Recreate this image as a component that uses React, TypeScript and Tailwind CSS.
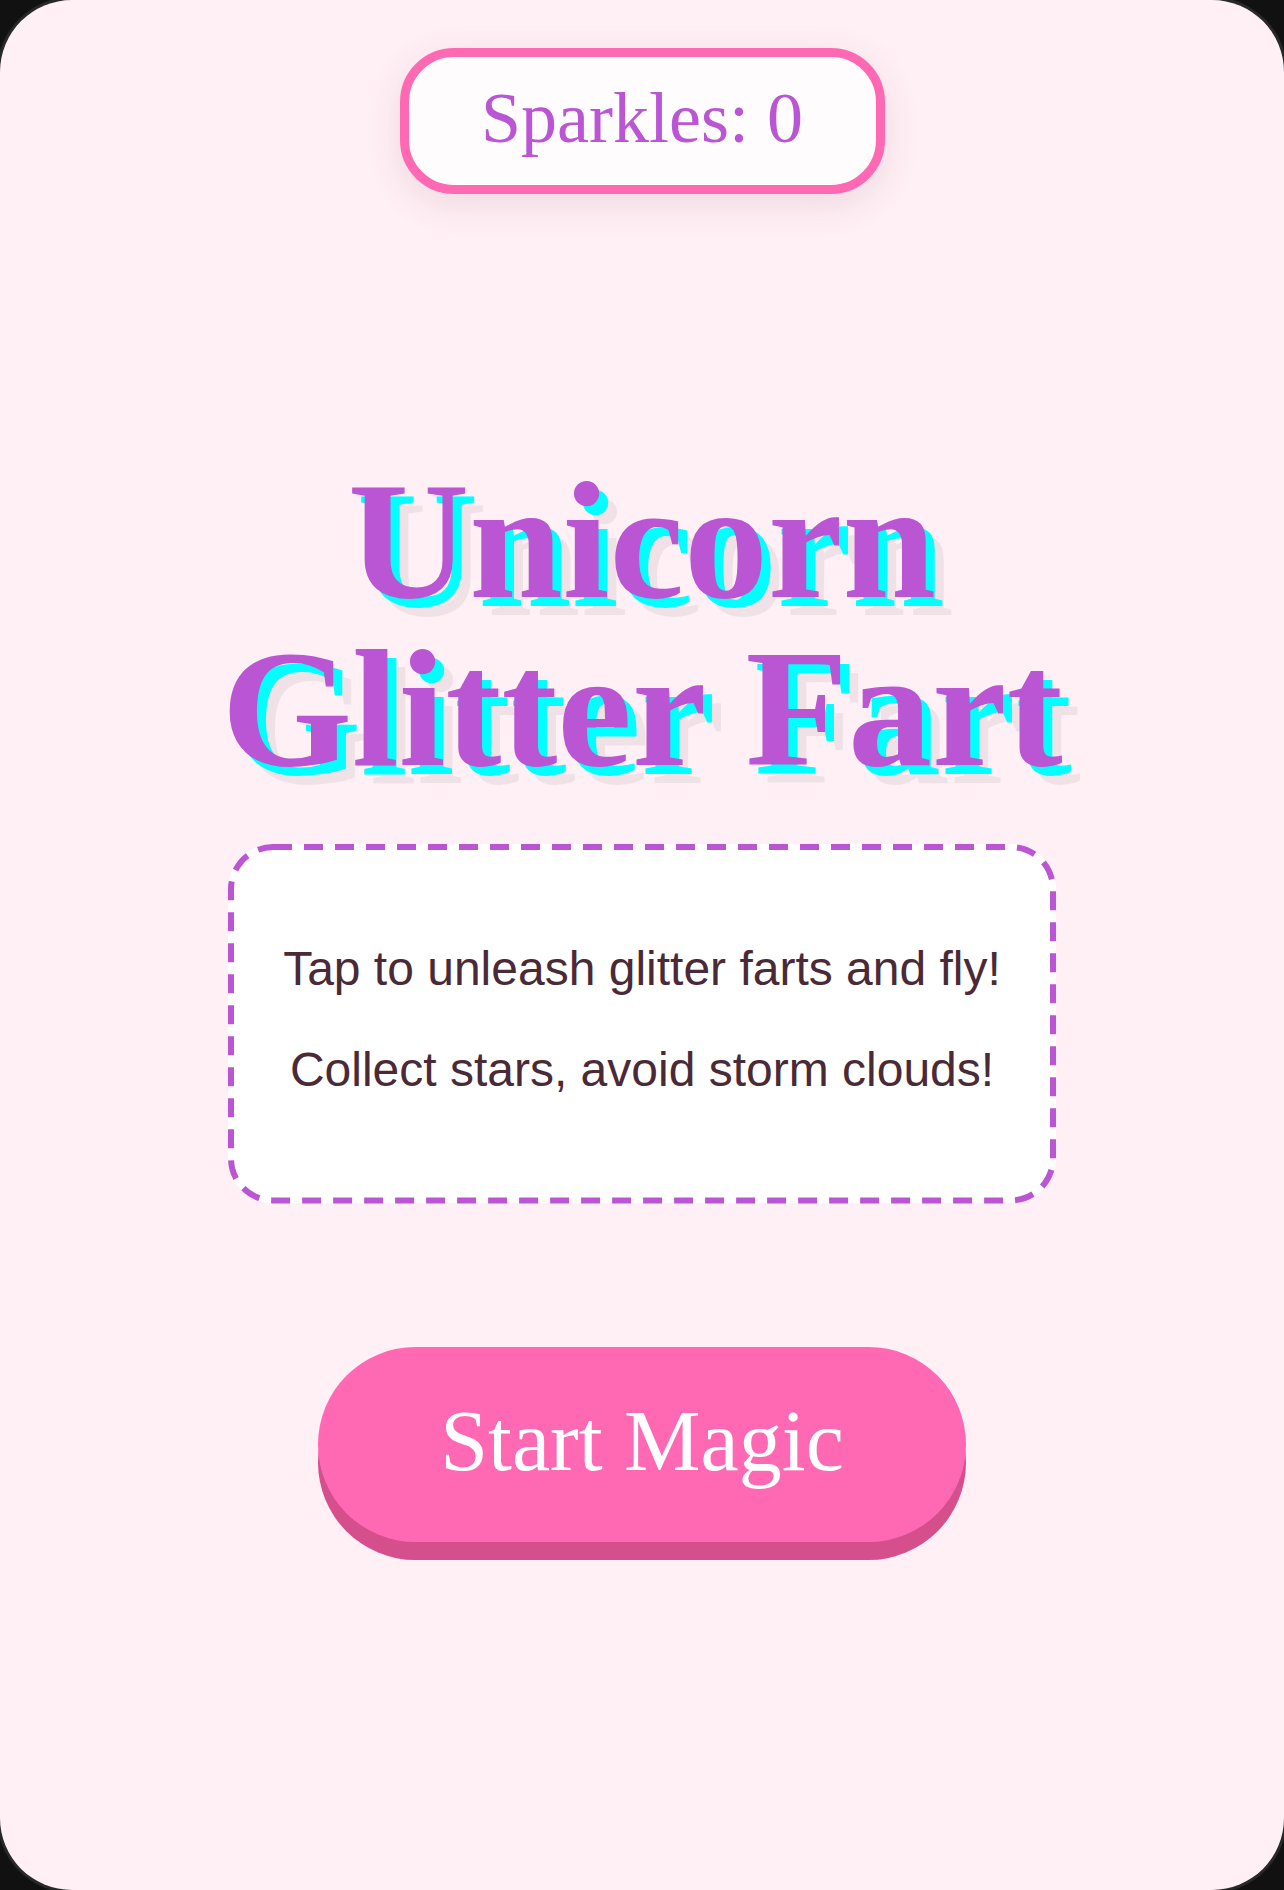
import React, { useState } from "react";

// Start screen for the glitter fart flying game
const serif = "font-['Liberation_Serif',_'Times_New_Roman',_serif]";
const sans = "font-['Liberation_Sans',_Arial,_sans-serif]";

const App = () => {
  const [sparkles, setSparkles] = useState(0);
  const [started, setStarted] = useState(false);

  const handleStart = () => {
    setStarted(true);
    setSparkles(0);
  };

  return (
    <div className="w-full h-[1890px] bg-[#111111] overflow-hidden">
      <div className="h-[1890px] w-full rounded-[72px] bg-[#fff0f5] shadow-[0_0_0_3px_#282828] flex flex-col items-center">
        {/* score pill */}
        <div
          className={`mt-[48px] h-[146px] w-[485px] rounded-[54px] border-[9px] border-[#ff69b4] bg-[#fffcfd] shadow-[0_10px_36px_rgba(120,40,80,0.12)] flex items-center justify-center pb-[6px] text-[72px] text-[#ba55d3] ${serif}`}
        >
          Sparkles: {sparkles}
        </div>

        <h1
          className={`mt-[262px] text-center text-[168px] leading-none font-bold text-[#ba55d3] [text-shadow:9px_9px_0_#00ffff,18px_18px_0_rgba(0,0,0,0.06)] ${serif}`}
        >
          <span className="block">Unicorn</span>
          <span className="block whitespace-nowrap">Glitter Fart</span>
        </h1>

        {/* instructions card, dashed outline drawn with long dashes */}
        <div
          className={`relative mt-[52px] w-[828px] rounded-[45px] border-[6px] border-transparent bg-white pt-[45px] pb-[54px] px-[45px] text-center text-[48px] leading-[1.15] text-[#4a2a36] ${sans}`}
        >
          <svg className="absolute -inset-[6px] w-[calc(100%+12px)] h-[calc(100%+12px)] overflow-visible pointer-events-none">
            <rect
              x="3"
              y="3"
              rx="42"
              className="[width:calc(100%-6px)] [height:calc(100%-6px)]"
              fill="none"
              stroke="#ba55d3"
              strokeWidth="6"
              strokeDasharray="19 12"
            />
          </svg>
          <p className="my-[46px]">Tap to unleash glitter farts and fly!</p>
          <p className="my-[46px]">Collect stars, avoid storm clouds!</p>
        </div>

        <button
          onClick={handleStart}
          className={`mt-[144px] h-[195px] w-[648px] rounded-full bg-[#ff69b4] shadow-[0_18px_0_#d44f8c] flex items-center justify-center pb-[6px] text-[86px] text-white ${serif}`}
        >
          {started ? "Start Magic" : "Start Magic"}
        </button>
      </div>
    </div>
  );
};

export default App;
